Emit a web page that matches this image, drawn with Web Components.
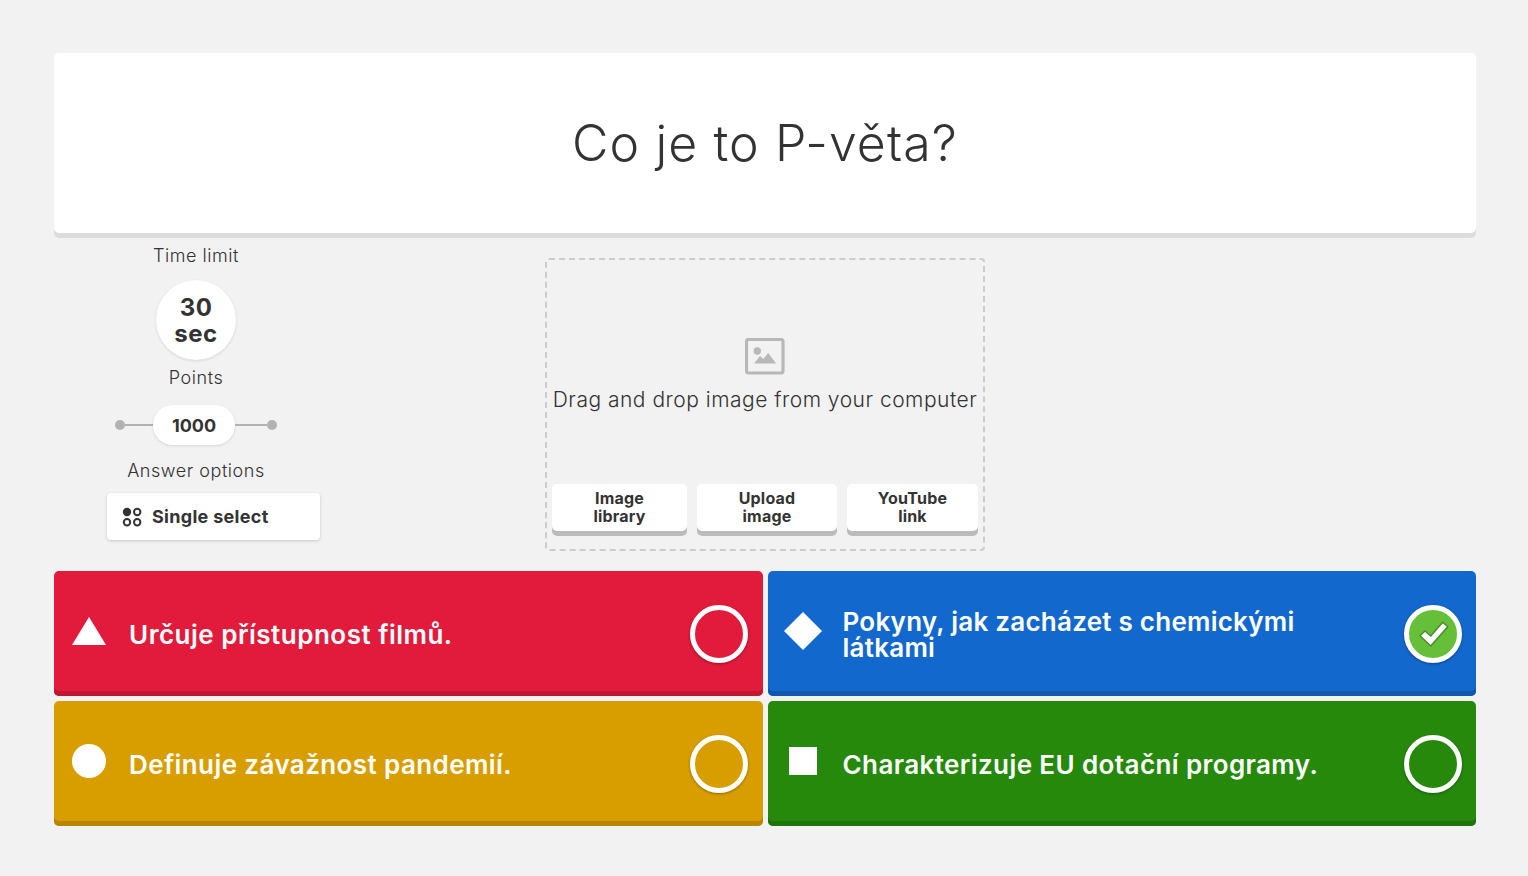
<!DOCTYPE html>
<html lang="cs">
<head>
<meta charset="utf-8">
<title>Quiz editor</title>
<style>
  html, body { margin: 0; background: #f2f2f2; }
  body { font-family: Inter, "Open Sans", sans-serif; color: #333; }
</style>
</head>
<body>
<quiz-editor>
  <question-title>Co je to P-věta?</question-title>
  <option-panel slot="options">
    <option-label>Time limit</option-label>
    <time-limit></time-limit>
    <option-label>Points</option-label>
    <points-slider></points-slider>
    <option-label>Answer options</option-label>
    <select-button>Single select</select-button>
  </option-panel>
  <image-drop slot="media"></image-drop>
  <answer-card slot="answers" color="red" shape="triangle" style="letter-spacing:.5px">Určuje přístupnost filmů.</answer-card>
  <answer-card slot="answers" color="blue" shape="diamond" style="letter-spacing:.25px" correct>Pokyny, jak zacházet s chemickými látkami</answer-card>
  <answer-card slot="answers" color="yellow" shape="circle">Definuje závažnost pandemií.</answer-card>
  <answer-card slot="answers" color="green" shape="square">Charakterizuje EU dotační programy.</answer-card>
</quiz-editor>

<script>
const define = (name, html) => {
  const template = document.createElement('template');
  template.innerHTML = html;
  customElements.define(name, class extends HTMLElement {
    constructor() {
      super();
      this.attachShadow({ mode: 'open' });
      this.shadowRoot.appendChild(template.content.cloneNode(true));
    }
  });
};

define('quiz-editor', `
  <style>
    :host { display: block; padding: 53px 52px 50px 54px; }
    .middle {
      display: grid;
      grid-template-columns: 284px 1fr 284px;
      height: 333px;
    }
    .media { display: flex; justify-content: center; padding-top: 20px; }
    .answers {
      display: grid;
      grid-template-columns: 1fr 1fr;
      grid-auto-rows: 125px;
      gap: 5px;
    }
  </style>
  <slot></slot>
  <div class="middle">
    <slot name="options"></slot>
    <div class="media"><slot name="media"></slot></div>
  </div>
  <div class="answers"><slot name="answers"></slot></div>
`);

define('question-title', `
  <style>
    :host {
      display: flex;
      align-items: center;
      justify-content: center;
      box-sizing: border-box;
      height: 185px;
      padding-bottom: 5px;
      background: #fff;
      border-radius: 5px;
      box-shadow: inset 0 -5px 0 #dcdcdc;
      font-size: 50px;
      letter-spacing: 1.1px;
      font-weight: 300;
      color: #333;
    }
  </style>
  <slot></slot>
`);

define('option-panel', `
  <style>
    :host { display: block; padding-top: 7px; }
  </style>
  <slot></slot>
`);

define('option-label', `
  <style>
    :host {
      display: block;
      text-align: center;
      font-size: 18px;
      letter-spacing: .55px;
      line-height: 22px;
      font-weight: 300;
      color: #333;
    }
  </style>
  <slot></slot>
`);

define('time-limit', `
  <style>
    :host {
      display: flex;
      flex-direction: column;
      align-items: center;
      justify-content: center;
      box-sizing: border-box;
      width: 80px;
      height: 80px;
      margin: 13px auto 7px;
      padding-top: 1px;
      background: #fff;
      border-radius: 50%;
      box-shadow: 0 1px 3px rgba(0,0,0,.12);
      font-size: 24px;
      letter-spacing: .5px;
      line-height: 26px;
      font-weight: 700;
      color: #333;
    }
  </style>
  <span>30</span><span>sec</span>
`);

define('points-slider', `
  <style>
    :host {
      display: flex;
      align-items: center;
      justify-content: center;
      height: 40px;
      margin: 16px 0 15px;
    }
    .dot { width: 10px; height: 10px; border-radius: 50%; background: #b2b2b2; }
    .line { width: 28px; height: 2px; background: #b2b2b2; }
    .line.long { width: 32px; }
    .value {
      display: flex;
      align-items: center;
      justify-content: center;
      width: 82px;
      height: 40px;
      background: #fff;
      border-radius: 20px;
      box-shadow: 0 1px 3px rgba(0,0,0,.12);
      font-size: 18px;
      font-weight: 700;
      color: #333;
    }
  </style>
  <span class="dot"></span><span class="line"></span>
  <span class="value">1000</span>
  <span class="line long"></span><span class="dot"></span>
`);

define('select-button', `
  <style>
    :host {
      display: flex;
      align-items: center;
      gap: 10px;
      box-sizing: border-box;
      width: 213px;
      height: 47px;
      margin: 11px 0 0 53px;
      padding-left: 15px;
      background: #fff;
      border-radius: 4px;
      box-shadow: 0 1px 3px rgba(0,0,0,.18);
      font-size: 18px;
      letter-spacing: .3px;
      font-weight: 700;
      color: #333;
    }
    svg { width: 20px; height: 20px; flex: none; }
  </style>
  <svg viewBox="0 0 20 20" fill="none">
    <circle cx="5" cy="5" r="4.2" fill="#333"/>
    <circle cx="15.2" cy="5" r="3.2" stroke="#333" stroke-width="2"/>
    <circle cx="5" cy="15.2" r="3.2" stroke="#333" stroke-width="2"/>
    <circle cx="15.2" cy="15.2" r="3.2" stroke="#333" stroke-width="2"/>
  </svg>
  <slot></slot>
`);

define('image-drop', `
  <style>
    :host {
      display: flex;
      flex-direction: column;
      align-items: center;
      box-sizing: border-box;
      width: 440px;
      height: 293px;
      padding: 78px 5px 13px;
      border: 2px dashed #ccc;
      border-radius: 4px;
    }
    svg { width: 40px; height: 37px; flex: none; }
    p {
      margin: 11px 0 0;
      font-size: 21px;
      letter-spacing: .5px;
      line-height: 28px;
      font-weight: 300;
      color: #333;
      white-space: nowrap;
    }
    .actions {
      display: flex;
      gap: 10px;
      width: 426px;
      margin-top: auto;
    }
  </style>
  <svg viewBox="0 0 40 37">
    <rect x="1.500" y="1.500" width="36.500" height="33.500" rx="2" fill="none" stroke="#b8b8b8" stroke-width="3.200"/>
    <circle cx="12.300" cy="13" r="3.700" fill="#b8b8b8"/>
    <path d="M9 25.500 15 18l3.300 3 5-6L31 25.500z" fill="#b8b8b8"/>
  </svg>
  <p>Drag and drop image from your computer</p>
  <div class="actions">
    <action-button style="width:135px">Image library</action-button>
    <action-button style="width:140px">Upload image</action-button>
    <action-button style="width:131px">YouTube link</action-button>
  </div>
`);

define('action-button', `
  <style>
    :host {
      display: flex;
      align-items: center;
      justify-content: center;
      box-sizing: border-box;
      height: 52px;
      padding: 0 32px 7px;
      background: #fff;
      border-radius: 5px;
      box-shadow: inset 0 -5px 0 #bbb;
      font-size: 16px;
      letter-spacing: .2px;
      line-height: 18px;
      font-weight: 700;
      text-align: center;
      color: #333;
    }
  </style>
  <slot></slot>
`);

const shapes = {
  triangle: '<svg viewBox="0 0 34 34"><path d="M17 3 34 31H0z" fill="#fff"/></svg>',
  diamond: '<svg viewBox="-2 -2 38 38" style="width:38px;height:38px;flex:none"><path d="M17 -2 36 17 17 36 -2 17z" fill="#fff"/></svg>',
  circle: '<svg viewBox="0 0 34 34"><circle cx="17" cy="17" r="17" fill="#fff"/></svg>',
  square: '<svg viewBox="0 0 34 34"><rect x="3" y="3" width="28" height="28" fill="#fff"/></svg>',
};

const colors = {
  red: ['#e21b3c', '#c01733'],
  blue: ['#1368ce', '#1058af'],
  yellow: ['#d89e00', '#b88600'],
  green: ['#26890c', '#20750a'],
};

const cardTemplate = document.createElement('template');
cardTemplate.innerHTML = `
  <style>
    :host {
      display: flex;
      align-items: center;
      box-sizing: border-box;
      height: 125px;
      padding: 0 14.5px 0 18px;
      background: var(--fill);
      border-radius: 5px;
      box-shadow: inset 0 -5px 0 var(--edge);
      color: #fff;
      font-size: 26px;
      letter-spacing: .4px;
      line-height: 26px;
      font-weight: 600;
    }
    .shape { display: flex; width: 34px; height: 34px; margin-top: -5px; flex: none; justify-content: center; align-items: center; }
    .shape svg { width: 100%; height: 100%; display: block; overflow: visible; }
    .text { flex: 1; margin: 2px 40px 0 23px; min-width: 0; }
    .mark {
      flex: none;
      box-sizing: border-box;
      width: 58px;
      height: 58px;
      display: flex;
      align-items: center;
      justify-content: center;
      border: 5px solid #fff;
      border-radius: 50%;
      box-shadow: 0 1px 3px rgba(0,0,0,.35);
    }
    :host([correct]) .mark { background: #66bf39; }
    .mark svg { display: none; width: 48px; height: 48px; flex: none; }
    :host([correct]) .mark svg { display: block; }
  </style>
  <span class="shape"></span>
  <span class="text"><slot></slot></span>
  <span class="mark">
    <svg viewBox="0 0 48 48">
      <path d="M11 25.700 16 21l5.700 5L33.700 12.300l5 4.400L21.700 36z" fill="#fff" stroke="#4a8a2a" stroke-width="1.500" stroke-linejoin="round"/>
    </svg>
  </span>
`;

class AnswerCard extends HTMLElement {
  connectedCallback() {
    if (this.shadowRoot) return;
    this.attachShadow({ mode: 'open' });
    this.shadowRoot.appendChild(cardTemplate.content.cloneNode(true));
    const [fill, edge] = colors[this.getAttribute('color')];
    this.style.setProperty('--fill', fill);
    this.style.setProperty('--edge', edge);
    this.shadowRoot.querySelector('.shape').innerHTML = shapes[this.getAttribute('shape')];
  }
}
customElements.define('answer-card', AnswerCard);
</script>
</body>
</html>
